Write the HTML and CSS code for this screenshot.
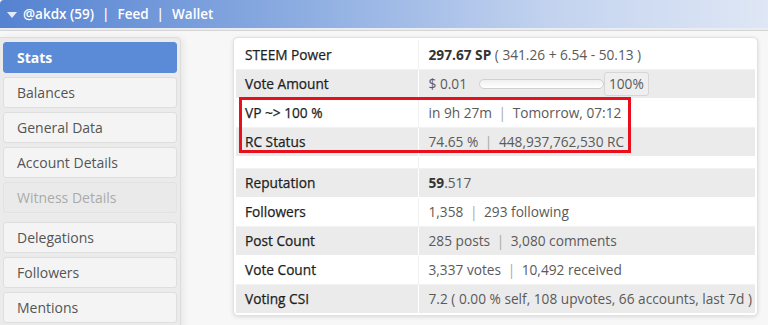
FILE: index.html
```html
<!DOCTYPE html>
<html lang="en">

<head>
    <meta charset="UTF-8">
    <meta name="viewport" content="width=device-width, initial-scale=1.0">
    <title>@akdx - Stats</title>
    <link rel="stylesheet" href="styles.css">
</head>

<body>
    <header class="topbar">
        <span class="caret"></span>
        <span class="topbar-link">@akdx (59)</span>
        <span class="topbar-sep">|</span>
        <span class="topbar-link">Feed</span>
        <span class="topbar-sep">|</span>
        <span class="topbar-link">Wallet</span>
    </header>

    <div class="main">
        <nav class="sidebar">
            <div class="nav-group">
                <a class="nav-item active">Stats</a>
                <a class="nav-item">Balances</a>
                <a class="nav-item">General Data</a>
                <a class="nav-item">Account Details</a>
                <a class="nav-item disabled">Witness Details</a>
            </div>
            <div class="nav-group">
                <a class="nav-item">Delegations</a>
                <a class="nav-item">Followers</a>
                <a class="nav-item">Mentions</a>
            </div>
        </nav>

        <div class="panel">
            <table class="stats">
                <tr>
                    <td class="label">STEEM Power</td>
                    <td class="value"><b>297.67 SP</b> ( 341.26 + 6.54 - 50.13 )</td>
                </tr>
                <tr class="alt">
                    <td class="label">Vote Amount</td>
                    <td class="value">
                        <div class="vote">
                            <span>$ 0.01</span>
                            <span class="slider"></span>
                            <span class="addon">100%</span>
                        </div>
                    </td>
                </tr>
                <tr>
                    <td class="label">VP ~&gt; 100 %</td>
                    <td class="value">in 9h 27m <span class="sep">|</span> Tomorrow, 07:12</td>
                </tr>
                <tr class="alt">
                    <td class="label">RC Status</td>
                    <td class="value">74.65 % <span class="sep">|</span> 448,937,762,530 RC</td>
                </tr>
                <tr class="spacer">
                    <td class="label"></td>
                    <td class="value"></td>
                </tr>
                <tr class="alt">
                    <td class="label">Reputation</td>
                    <td class="value"><b>59</b>.517</td>
                </tr>
                <tr>
                    <td class="label">Followers</td>
                    <td class="value">1,358 <span class="sep">|</span> 293 following</td>
                </tr>
                <tr class="alt">
                    <td class="label">Post Count</td>
                    <td class="value">285 posts <span class="sep">|</span> 3,080 comments</td>
                </tr>
                <tr>
                    <td class="label">Vote Count</td>
                    <td class="value">3,337 votes <span class="sep">|</span> 10,492 received</td>
                </tr>
                <tr class="alt">
                    <td class="label">Voting CSI</td>
                    <td class="value">7.2 ( 0.00 % self, 108 upvotes, 66 accounts, last 7d )</td>
                </tr>
            </table>

            <!-- highlight annotation -->
            <div class="highlight"></div>
        </div>
    </div>
</body>

</html>
```

FILE: styles.css
```css
* {
    margin: 0;
    padding: 0;
    box-sizing: border-box;
    font-family: 'Open Sans', 'Liberation Sans', sans-serif;
}

body {
    background-color: #f7f7f7;
    color: #555;
    font-size: 13.7px;
    width: 768px;
    height: 325px;
    overflow: hidden;
}

.topbar {
    height: 28px;
    display: flex;
    align-items: center;
    padding-left: 7px;
    background: linear-gradient(to right, #5582d1 0%, #8eaee2 40%, #c3d3ef 72%, #dfe7f5 100%);
    border-top-left-radius: 4px;
    color: #fff;
    font-weight: 600;
    font-size: 13.5px;
    box-shadow: 0 2px 0 #e9edf3, 0 3px 0 #d5d5d5;
}

.caret {
    width: 0;
    height: 0;
    border-left: 5px solid transparent;
    border-right: 5px solid transparent;
    border-top: 6px solid #e4ebf7;
    margin-right: 6px;
    margin-top: 1px;
}

.topbar-sep {
    margin: 0 8px;
}

.main {
    display: flex;
    align-items: flex-start;
    padding-top: 9px;
}

.sidebar {
    width: 181px;
    background-color: #ebebeb;
    border: 1px solid #dcdcdc;
    border-left: none;
    border-radius: 0 5px 0 0;
    padding: 4px 3px 10px 3px;
    box-shadow: 3px 0 6px rgba(0, 0, 0, 0.06);
    height: 300px;
}

.nav-group + .nav-group {
    margin-top: 9px;
}

.nav-item {
    display: block;
    height: 31px;
    line-height: 29px;
    padding-left: 13px;
    margin-bottom: 4px;
    background-color: #f4f4f4;
    border: 1px solid #dedede;
    border-radius: 3px;
    color: #555;
    font-size: 14px;
    cursor: pointer;
}

.nav-item.active {
    background-color: #5b8bd6;
    border-color: #5b8bd6;
    color: #fff;
    font-weight: 700;
}

.nav-item.disabled {
    background-color: #eaeaea;
    border-color: #e2e2e2;
    color: #aaa;
}

.panel {
    position: relative;
    margin-left: 52px;
    width: 525px;
    background-color: #fff;
    border: 1px solid #e2e2e2;
    border-radius: 5px;
    padding: 2px 2px 1px 2px;
    box-shadow: 0 1px 4px rgba(0, 0, 0, 0.12);
}

.stats {
    width: 100%;
    border-collapse: collapse;
}

.stats tr {
    height: 29px;
    border-bottom: 1px solid #f2f2f2;
}

.stats tr.alt {
    background-color: #ebebeb;
    border-bottom-color: #fff;
}

.stats tr.spacer {
    height: 12px;
}

.label {
    width: 182px;
    padding-left: 9px;
    color: #1e1e1e;
    -webkit-text-stroke: 0.25px #1e1e1e;
    border-right: 1px solid #f2f2f2;
}

.alt .label {
    border-right-color: #fff;
}

.value {
    padding-left: 10px;
    color: #5a5a5a;
    white-space: nowrap;
}

.value b {
    color: #333;
    font-weight: 700;
}

.sep {
    color: #aaa;
    margin: 0 3px;
}

.vote {
    display: flex;
    align-items: center;
}

.slider {
    width: 125px;
    height: 10px;
    margin-left: 12px;
    background: linear-gradient(#f0f0f0, #fff);
    border: 1px solid #d0d0d0;
    border-radius: 5px;
}

.addon {
    height: 24px;
    line-height: 22px;
    padding: 0 4px;
    background-color: #efefef;
    border: 1px solid #d6d6d6;
    border-radius: 3px;
}

.highlight {
    position: absolute;
    left: 5px;
    top: 59px;
    width: 392px;
    height: 56px;
    border: 3px solid #e8101c;
    pointer-events: none;
}
```
